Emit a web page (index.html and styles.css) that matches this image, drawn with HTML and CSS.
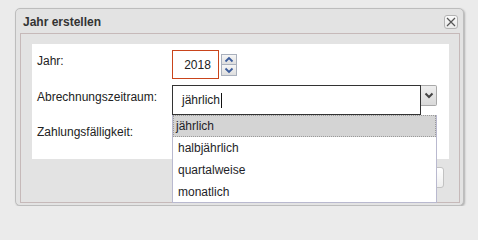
FILE: index.html
```html
<!DOCTYPE html>
<html lang="de">
<head>
<meta charset="utf-8">
<title>Jahr erstellen</title>
<link rel="stylesheet" href="styles.css">
</head>
<body>
<div class="dialog">
  <div class="titlebar">
    <span class="title">Jahr erstellen</span>
    <button class="close" type="button" aria-label="Schließen">
      <svg width="10" height="10" viewBox="0 0 10 10"><path d="M1 1 L9 9 M9 1 L1 9" stroke="#555" stroke-width="1.2" fill="none"/></svg>
    </button>
  </div>
  <div class="frame">
    <div class="panel">
      <div class="form">
        <label class="lbl">Jahr:</label>
        <div class="field">
          <div class="spin-input">2018</div>
          <div class="spinner">
            <div class="spin-btn">
              <svg width="10" height="7" viewBox="0 0 10 7"><path d="M1.5 5.5 L5 2 L8.5 5.5" stroke="#3b5c9c" stroke-width="1.8" fill="none"/></svg>
            </div>
            <div class="spin-btn">
              <svg width="10" height="7" viewBox="0 0 10 7"><path d="M1.5 1.5 L5 5 L8.5 1.5" stroke="#3b5c9c" stroke-width="1.8" fill="none"/></svg>
            </div>
          </div>
        </div>
        <label class="lbl">Abrechnungszeitraum:</label>
        <div class="field combo-wrap">
          <div class="combo-input">jährlich<span class="caret"></span></div>
          <div class="combo-btn">
            <svg width="10" height="7" viewBox="0 0 10 7"><path d="M1.5 1.5 L5 5 L8.5 1.5" stroke="#444" stroke-width="2" fill="none"/></svg>
          </div>
          <ul class="list">
            <li class="item active">jährlich</li>
            <li class="item">halbjährlich</li>
            <li class="item">quartalweise</li>
            <li class="item">monatlich</li>
          </ul>
        </div>
        <label class="lbl lbl-top">Zahlungsfälligkeit:</label>
        <div class="field"></div>
      </div>
    </div>
    <div class="buttons">
      <button class="btn" type="button">Speichern</button>
    </div>
  </div>
</div>
</body>
</html>
```
FILE: styles.css
```css
html, body {
  margin: 0;
  padding: 0;
}
html {
  height: 213px;
  overflow: hidden;
  background: #ebebeb;
}
body {
  background: #ebebeb;
  font-family: "Liberation Sans", Arial, sans-serif;
  font-size: 12px;
  color: #222;
  padding: 8px 0 0 15px;
}
.dialog {
  width: 447px;
  height: 196px;
  background: #e3e3e3;
  border: 1px solid #bdbdbd;
  border-radius: 5px;
  box-shadow: 1px 1px 2px rgba(0,0,0,0.25);
  display: flex;
  flex-direction: column;
}
.titlebar {
  height: 24px;
  display: flex;
  align-items: center;
  justify-content: space-between;
  padding: 0 5px 0 7px;
}
.title {
  font-weight: bold;
  color: #333;
  font-size: 12px;
  margin-top: 1px;
}
.close {
  width: 14px;
  height: 14px;
  padding: 0;
  margin-top: 2px;
  border: 1px solid #b4b4b4;
  border-radius: 3px;
  background: linear-gradient(#fafafa, #e9e9e9);
  display: flex;
  align-items: center;
  justify-content: center;
}
.frame {
  margin: 0 3px 2px 4px;
  flex: 1;
  border: 1px solid #c6b9b9;
  padding: 10px 10px 0 11px;
  display: flex;
  flex-direction: column;
}
.panel {
  background: #fff;
  height: 115px;
  padding: 6px 5px 0 5px;
  box-sizing: border-box;
}
.form {
  display: grid;
  grid-template-columns: 135px 1fr;
  grid-template-rows: 29px 30px 20px;
  row-gap: 6px;
}
.lbl {
  align-self: center;
  padding-bottom: 7px;
  color: #222;
}
.lbl-top {
  align-self: start;
  padding: 4px 0 0 0;
}
.field {
  display: flex;
  align-items: center;
}
.spin-input {
  width: 41px;
  height: 27px;
  border: 1px solid #c9441b;
  display: flex;
  align-items: center;
  justify-content: center;
  padding-left: 4px;
  font-size: 12px;
  color: #222;
}
.spinner {
  margin-left: 2px;
  margin-top: 1px;
  display: flex;
  flex-direction: column;
  width: 16px;
}
.spin-btn {
  height: 9px;
  border: 1px solid #a9b0bd;
  background: linear-gradient(#f6f6f6, #dedede);
  display: flex;
  align-items: center;
  justify-content: center;
}
.spin-btn + .spin-btn {
  border-top: none;
  height: 10px;
}
.combo-wrap {
  position: relative;
  align-items: flex-start;
}
.combo-input {
  width: 238px;
  height: 28px;
  border: 1px solid #333;
  display: flex;
  align-items: center;
  padding-left: 9px;
  color: #222;
  font-size: 12px;
}
.caret {
  display: inline-block;
  width: 1px;
  height: 15px;
  background: #111;
  margin-left: 1px;
}
.combo-btn {
  width: 15px;
  height: 19px;
  border: 1px solid #a8a8a8;
  border-left: none;
  border-radius: 0 2px 2px 0;
  background: linear-gradient(#eeeeee, #d9d9d9);
  display: flex;
  align-items: center;
  justify-content: center;
}
.list {
  position: absolute;
  left: 0;
  top: 30px;
  width: 263px;
  height: 87px;
  margin: 0;
  padding: 0;
  list-style: none;
  background: #fff;
  border: 1px solid #b9b9cf;
  border-top: none;
  z-index: 5;
}
.item {
  height: 22px;
  line-height: 22px;
  padding-left: 5px;
  box-sizing: border-box;
  color: #1e1e28;
  font-size: 12px;
}
.item.active {
  background: #d4d4d4;
  border: 1px dotted #9a9a9a;
  padding-left: 2px;
  line-height: 20px;
}
.buttons {
  display: flex;
  justify-content: flex-end;
  padding: 8px 5px 0 0;
}
.btn {
  width: 72px;
  height: 21px;
  border: 1px solid #c2c2c2;
  border-radius: 3px;
  background: linear-gradient(#ffffff, #efefef);
  font-family: "Liberation Sans", Arial, sans-serif;
  font-size: 12px;
  color: #222;
}
```
